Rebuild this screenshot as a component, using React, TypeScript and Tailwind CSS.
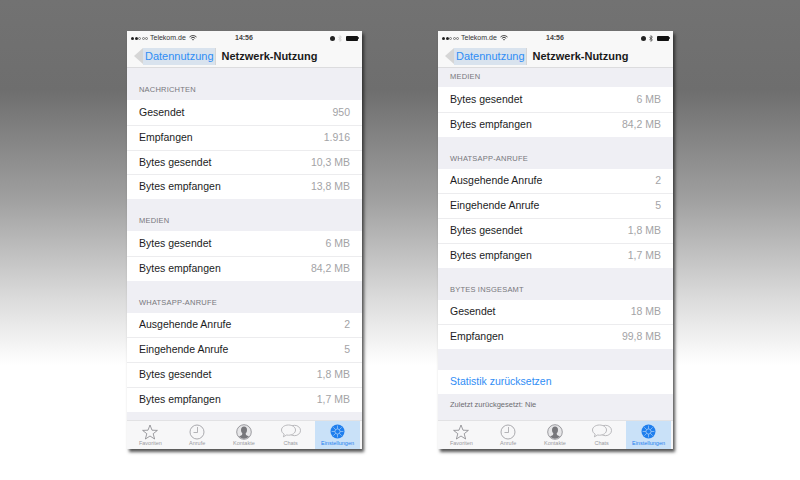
import React from 'react';

type Row = { label: string; value: string };
type Section = { title: string; rows: Row[] };

const nachrichten: Section = {
    title: 'NACHRICHTEN',
    rows: [
        { label: 'Gesendet', value: '950' },
        { label: 'Empfangen', value: '1.916' },
        { label: 'Bytes gesendet', value: '10,3 MB' },
        { label: 'Bytes empfangen', value: '13,8 MB' },
    ],
};
const medien: Section = {
    title: 'MEDIEN',
    rows: [
        { label: 'Bytes gesendet', value: '6 MB' },
        { label: 'Bytes empfangen', value: '84,2 MB' },
    ],
};
const anrufe: Section = {
    title: 'WHATSAPP-ANRUFE',
    rows: [
        { label: 'Ausgehende Anrufe', value: '2' },
        { label: 'Eingehende Anrufe', value: '5' },
        { label: 'Bytes gesendet', value: '1,8 MB' },
        { label: 'Bytes empfangen', value: '1,7 MB' },
    ],
};
const insgesamt: Section = {
    title: 'BYTES INSGESAMT',
    rows: [
        { label: 'Gesendet', value: '18 MB' },
        { label: 'Empfangen', value: '99,8 MB' },
    ],
};

const SectionBlock = ({ section, compact }: { section: Section; compact?: boolean }) => (
    <div>
        <div className={`flex items-end px-3 pb-[4px] text-[7.5px] tracking-[0.2px] text-[#77777c] ${compact ? 'h-[19px]' : 'h-[32px]'}`}>
            <span className="leading-[12px]">{section.title}</span>
        </div>
        <div className="bg-white">
            {section.rows.map((row, i) => (
                <div
                    key={row.label}
                    className={`flex h-[24.75px] items-center justify-between pr-3 pl-3 text-[10.5px] ${i > 0 ? 'border-t border-[#ececee]' : ''}`}
                >
                    <span className="text-[#1c1c1e]">{row.label}</span>
                    <span className="text-[#a3a3a6]">{row.value}</span>
                </div>
            ))}
        </div>
    </div>
);

const StatusBar = ({ bluetoothDim }: { bluetoothDim?: boolean }) => (
    <div className="relative flex h-[14px] items-center justify-between pr-[3px] pl-[4px] text-[7px] text-[#333]">
        <div className="flex items-center">
            <div className="mr-[1px] flex items-center gap-[0.5px]">
                <span className="h-[3px] w-[3px] rounded-full bg-[#222]" />
                <span className="h-[3px] w-[3px] rounded-full bg-[#222]" />
                <span className="h-[3px] w-[3px] rounded-full border-[0.5px] border-[#777]" />
                <span className="h-[3px] w-[3px] rounded-full border-[0.5px] border-[#777]" />
                <span className="h-[3px] w-[3px] rounded-full border-[0.5px] border-[#777]" />
            </div>
            <span className="ml-[1px]">Telekom.de</span>
            <svg width="8" height="6" viewBox="0 0 8 6" className="ml-[3px]">
                <path d="M0.5 2 A5 5 0 0 1 7.5 2 M1.8 3.3 A3.2 3.2 0 0 1 6.2 3.3" fill="none" stroke="#333" strokeWidth="0.9" />
                <path d="M3 4.5 L4 5.6 L5 4.5 A1.5 1.5 0 0 0 3 4.5 Z" fill="#333" />
            </svg>
        </div>
        <span className="absolute left-[108px] font-bold text-[#444]">14:56</span>
        <div className="flex items-center gap-[3px]">
            <span className="h-[5px] w-[5px] rounded-full bg-[#222]" />
            <svg width="4" height="7" viewBox="0 0 4 7">
                <path d="M0.3 1.8 L3.4 4.9 L2 6.4 V0.6 L3.4 2.1 L0.3 5.2" fill="none" stroke={bluetoothDim ? '#c8c8c8' : '#333'} strokeWidth="0.7" />
            </svg>
            <div className="ml-[1px] flex items-center">
                <div className="h-[5px] w-[12px] rounded-[1px] bg-[#111]" />
                <div className="h-[2px] w-[1px] bg-[#555]" />
            </div>
        </div>
    </div>
);

const NavBar = () => (
    <div className="flex h-[23px] items-center border-b border-[#dcdcde] pl-[7px]">
        <div className="flex h-[17px] items-center">
            <div className="h-0 w-0 border-y-[8.5px] border-r-[9px] border-y-transparent border-r-[#d6d6d6]" />
            <div className="flex h-[17px] items-center bg-[#d6d6d6] pr-[1px] text-[11px] text-[#2f8df5]">
                <span className="bg-[#d9e3ee] pr-[1px] pl-[2px] leading-[17px]">Datennutzung</span>
            </div>
        </div>
        <span className="ml-[6px] text-[11px] font-bold text-[#1a1a1a]">Netzwerk-Nutzung</span>
    </div>
);

const StarIcon = () => (
    <svg width="16" height="16" viewBox="0 0 16 16">
        <path d="M8 1 L10 6.2 L15.4 6.4 L11.2 9.7 L12.6 15 L8 12 L3.4 15 L4.8 9.7 L0.6 6.4 L6 6.2 Z" fill="none" stroke="#85858a" strokeWidth="0.8" />
    </svg>
);

const ClockIcon = () => (
    <svg width="16" height="16" viewBox="0 0 16 16">
        <circle cx="8" cy="8" r="7" fill="none" stroke="#a2a2a6" strokeWidth="0.9" />
        <path d="M8.5 3 V8.5 H4.5" fill="none" stroke="#a2a2a6" strokeWidth="0.8" />
    </svg>
);

const ContactIcon = () => (
    <svg width="16" height="16" viewBox="0 0 16 16">
        <circle cx="8" cy="8" r="7.3" fill="#e6e6e8" stroke="#85858a" strokeWidth="0.8" />
        <ellipse cx="8" cy="6" rx="3" ry="3.6" fill="#77777b" />
        <path d="M6.4 9 H9.6 L10 11 L13 12.6 A7 7 0 0 1 3 12.6 L6 11 Z" fill="#77777b" />
    </svg>
);

const ChatIcon = () => (
    <svg width="20" height="15" viewBox="0 0 20 15">
        <ellipse cx="13.5" cy="6.5" rx="6" ry="5.2" fill="none" stroke="#a9a9ad" strokeWidth="0.8" />
        <path d="M7.5 1 C3.5 1 0.5 3.2 0.5 6 C0.5 7.8 1.6 9.2 3.2 10.2 L2.4 12.8 L5.6 11 C6.2 11.1 6.9 11.2 7.5 11.2 C11.5 11.2 14.5 9 14.5 6 C14.5 3.2 11.5 1 7.5 1 Z" fill="#f7f7f8" stroke="#a9a9ad" strokeWidth="0.8" />
    </svg>
);

const GearIcon = () => (
    <svg width="15" height="15" viewBox="0 0 15 15">
        <circle cx="7.5" cy="7.5" r="7" fill="#1f7fee" />
        <circle cx="7.5" cy="7.5" r="2.6" fill="none" stroke="#a8cdf6" strokeWidth="0.8" />
        <path d="M7.5 1.6 V4.9 M7.5 10.1 V13.4 M1.6 7.5 H4.9 M10.1 7.5 H13.4 M3.3 3.3 L5.6 5.6 M9.4 9.4 L11.7 11.7 M11.7 3.3 L9.4 5.6 M5.6 9.4 L3.3 11.7" stroke="#a8cdf6" strokeWidth="0.7" />
    </svg>
);

const tabs = [
    { label: 'Favoriten', icon: <StarIcon /> },
    { label: 'Anrufe', icon: <ClockIcon /> },
    { label: 'Kontakte', icon: <ContactIcon /> },
    { label: 'Chats', icon: <ChatIcon /> },
];

const TabBar = () => (
    <div className="flex h-[29px] border-t border-[#e2e2e4] bg-[#f7f7f8]">
        {tabs.map((tab) => (
            <div key={tab.label} className="flex flex-1 flex-col items-center justify-end pb-[2px]">
                <div className="flex h-[17px] items-center">{tab.icon}</div>
                <span className="text-[5.5px] leading-[7px] text-[#9a9a9e]">{tab.label}</span>
            </div>
        ))}
        <div className="mr-[2px] ml-[1px] flex w-[45px] flex-col items-center justify-end bg-[#c9e1f8] pb-[2px]">
            <div className="flex h-[17px] items-center"><GearIcon /></div>
            <span className="text-[5.5px] leading-[7px] text-[#1f7fee]">Einstellungen</span>
        </div>
    </div>
);

const Phone = ({ children, bluetoothDim }: { children: React.ReactNode; bluetoothDim?: boolean }) => (
    <div className="flex h-[418px] w-[235px] flex-col overflow-hidden bg-[#efeff4] shadow-[2px_3px_3px_rgba(30,30,30,0.75)]">
        <div className="bg-[#f8f8f8]">
            <StatusBar bluetoothDim={bluetoothDim} />
            <NavBar />
        </div>
        <div className="flex-1 overflow-hidden">{children}</div>
        <TabBar />
    </div>
);

export default function App() {
    return (
        <div
            className="flex h-[480px] w-[800px] items-start gap-[76px] bg-[linear-gradient(to_bottom,#727272_0px,#6e6e6e_90px,#a0a0a0_200px,#dcdcdc_300px,#ffffff_365px)] pt-[31px] pl-[127px]"
            style={{ fontFamily: '"Liberation Sans", Arial, sans-serif' }}
        >
            <Phone bluetoothDim>
                <SectionBlock section={nachrichten} />
                <SectionBlock section={medien} />
                <SectionBlock section={anrufe} />
            </Phone>
            <Phone>
                <SectionBlock section={medien} compact />
                <SectionBlock section={anrufe} />
                <SectionBlock section={insgesamt} />
                <div className="mt-[21px] flex h-[24px] items-center bg-white px-3 text-[10.5px] text-[#2f8df5]">
                    Statistik zurücksetzen
                </div>
                <div className="px-3 pt-[5px] text-[7.5px] leading-[12px] text-[#6d6d72]">Zuletzt zurückgesetzt: Nie</div>
            </Phone>
        </div>
    );
}
